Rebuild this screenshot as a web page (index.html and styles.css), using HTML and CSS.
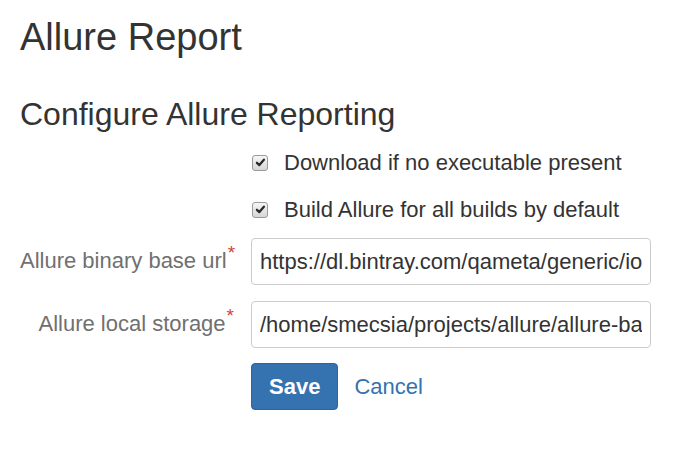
FILE: index.html
```html
<!DOCTYPE html>
<html lang="en">
<head>
<meta charset="utf-8">
<title>Allure Report</title>
<link rel="stylesheet" href="styles.css">
</head>
<body>
<h1 class="page-title">Allure Report</h1>
<h2 class="section-title">Configure Allure Reporting</h2>
<form class="config-form">
  <div class="row check-row">
    <div class="label-col"></div>
    <label class="field-col check">
      <span class="checkbox checked"><svg viewBox="0 0 16 16"><path d="M3.6 8.4 L6.6 11.2 L12.2 4.6" fill="none" stroke="#2a2a2a" stroke-width="2.8" stroke-linecap="round" stroke-linejoin="round"/></svg></span>
      <span class="check-text">Download if no executable present</span>
    </label>
  </div>
  <div class="row check-row">
    <div class="label-col"></div>
    <label class="field-col check">
      <span class="checkbox checked"><svg viewBox="0 0 16 16"><path d="M3.6 8.4 L6.6 11.2 L12.2 4.6" fill="none" stroke="#2a2a2a" stroke-width="2.8" stroke-linecap="round" stroke-linejoin="round"/></svg></span>
      <span class="check-text">Build Allure for all builds by default</span>
    </label>
  </div>
  <div class="row input-row">
    <label class="label-col field-label">Allure binary base url<span class="req">*</span></label>
    <div class="field-col"><input class="text-input" type="text" value="https://dl.bintray.com/qameta/generic/io/qameta/allure/allure/"></div>
  </div>
  <div class="row input-row">
    <label class="label-col field-label">Allure local storage<span class="req">*</span></label>
    <div class="field-col"><input class="text-input" type="text" value="/home/smecsia/projects/allure/allure-bamboo/target"></div>
  </div>
  <div class="row button-row">
    <div class="label-col"></div>
    <div class="field-col buttons">
      <button type="button" class="btn-primary">Save</button>
      <a class="cancel-link" href="#">Cancel</a>
    </div>
  </div>
</form>
</body>
</html>
```
FILE: styles.css
```css
html, body {
  margin: 0;
  padding: 0;
  background: #fff;
}
body {
  padding: 0 20px;
  font-family: "Liberation Sans", Arial, sans-serif;
  color: #333;
  font-size: 22px;
}
.page-title {
  margin: 17px 0 0;
  font-size: 38px;
  font-weight: 400;
  line-height: 40px;
  color: #333;
}
.section-title {
  margin: 39px 0 0;
  font-size: 32px;
  font-weight: 400;
  line-height: 36px;
  color: #333;
}
.config-form {
  margin-top: 7px;
  display: flex;
  flex-direction: column;
}
.row {
  display: flex;
  align-items: center;
}
.label-col {
  width: 216px;
  flex: none;
  padding-right: 15px;
  text-align: right;
}
.field-col {
  width: 400px;
  flex: none;
}
.check-row {
  height: 47px;
}
.check {
  display: flex;
  align-items: center;
  gap: 16px;
  cursor: pointer;
}
.checkbox {
  width: 14px;
  height: 14px;
  margin-left: 1px;
  border: 1px solid #9a9a9a;
  border-radius: 3px;
  background: linear-gradient(#f6f6f6, #d6d6d6);
  display: flex;
  align-items: center;
  justify-content: center;
  box-sizing: content-box;
}
.checkbox svg {
  width: 13px;
  height: 13px;
}
.check-text {
  color: #333;
  line-height: 24px;
}
.input-row {
  margin-top: 5px;
}
.input-row + .input-row {
  margin-top: 16px;
}
.field-label {
  color: #707070;
  line-height: 24px;
  white-space: nowrap;
}
.req {
  color: #d04437;
  position: relative;
  top: -9px;
  font-size: 19px;
  margin-left: 1px;
  margin-right: 2px;
}
.text-input {
  box-sizing: border-box;
  width: 400px;
  height: 47px;
  padding: 0 8px;
  border: 1px solid #ccc;
  border-radius: 4px;
  font-family: "Liberation Sans", Arial, sans-serif;
  font-size: 22px;
  color: #333;
  background: #fff;
  outline: none;
}
.button-row {
  margin-top: 15px;
}
.buttons {
  display: flex;
  align-items: center;
  gap: 16px;
}
.btn-primary {
  height: 47px;
  padding: 0 17px;
  border: 1px solid #2d649d;
  border-radius: 4px;
  background: #3572b0;
  color: #fff;
  font-family: "Liberation Sans", Arial, sans-serif;
  font-size: 22px;
  font-weight: 700;
  cursor: pointer;
}
.cancel-link {
  color: #3572b0;
  text-decoration: none;
}
```
